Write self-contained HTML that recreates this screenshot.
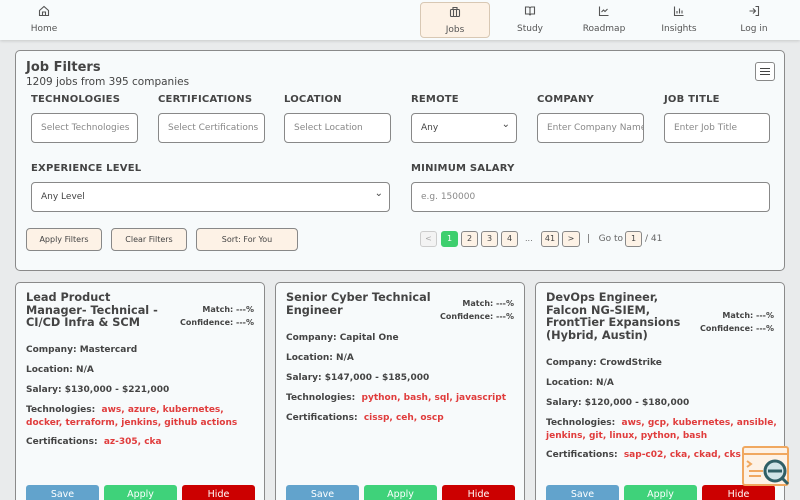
<!DOCTYPE html>
<html><head><meta charset="utf-8"><style>
*{box-sizing:border-box;margin:0;padding:0}
html{width:800px;height:500px;overflow:hidden}
body{width:800px;height:500px;overflow:hidden;background:#e9ebec;font-family:"DejaVu Sans","Liberation Sans",sans-serif;color:#444;position:relative}
.nav{position:absolute;left:0;top:0;width:800px;height:40px;background:#f8fbfc;box-shadow:0 1px 3px rgba(0,0,0,.15)}
.ni{position:absolute;top:0;height:40px;width:70px;text-align:center;font-size:9px;color:#555}
.ni svg{position:absolute;left:29px;top:5px}
.ni span{position:absolute;left:0;right:0;top:24px}
.ni.act{background:#fdf2e6;border:1px solid #d8c8b4;border-radius:4px;top:2px;height:36px}
.ni.act svg{top:3px;left:28px}.ni.act span{top:22px}
.panel{position:absolute;left:15px;top:50px;width:770px;height:221px;background:#f7fafb;border:1px solid #8a8a8a;border-radius:5px}
.abs{position:absolute}
.lbl{position:absolute;font-size:10px;font-weight:bold;color:#444;letter-spacing:.2px}
.inp{position:absolute;height:30px;border:1px solid #888;border-radius:4px;background:#fff;font-size:9px;color:#888;padding:0 9px;line-height:28px;white-space:nowrap;overflow:hidden}
.sel{color:#444}
.sel::after{content:"⌄";position:absolute;right:6px;top:-3px;font-size:10px;color:#444}
.btn{position:absolute;height:23px;border:1px solid #888;border-radius:4px;background:#fdf2e6;font-size:8px;color:#444;text-align:center;line-height:21px}
.pg{position:absolute;top:231px;height:16px;border:1px solid #888;border-radius:3px;background:#fdf2e6;font-size:8px;line-height:14px;text-align:center;color:#444}
.card{position:absolute;top:282px;width:250px;height:230px;background:#f7fafb;border:1px solid #8a8a8a;border-radius:5px}
.tt{position:absolute;left:10px;top:9px;font-size:11.3px;font-weight:bold;line-height:12.5px;color:#444}
.mt{position:absolute;right:10px;font-size:8px;font-weight:bold;text-align:right;line-height:12.5px}
.f{position:absolute;left:10px;font-size:9px;font-weight:bold;line-height:12.5px;width:238px}
.r{color:#e03c3c}
.b{position:absolute;top:202px;width:73px;height:18px;border-radius:3px;color:#fff;font-size:9.5px;text-align:center;line-height:20px}
</style></head><body>
<div class="nav">
 <div class="ni" style="left:9px"><svg width="12" height="12" viewBox="0 0 12 12" fill="none" stroke="#555" stroke-width="1.1"><path d="M1.5 5.5L6 1.5l4.5 4v5h-9z M4.5 10.5V7h3v3.5"/></svg><span>Home</span></div>
 <div class="ni act" style="left:420px"><svg width="12" height="12" viewBox="0 0 12 12" fill="none" stroke="#555" stroke-width="1.1"><rect x="1.5" y="3.5" width="9" height="7" rx="1"/><path d="M4 3.5V1.5h4v2M4.5 3.5v7M7.5 3.5v7"/></svg><span>Jobs</span></div>
 <div class="ni" style="left:495px"><svg width="12" height="12" viewBox="0 0 12 12" fill="none" stroke="#555" stroke-width="1.1"><path d="M1.5 2h3.5l1 1 1-1h3.5v7H7L6 10 5 9H1.5z M6 3v7"/></svg><span>Study</span></div>
 <div class="ni" style="left:569px"><svg width="12" height="12" viewBox="0 0 12 12" fill="none" stroke="#555" stroke-width="1.1"><path d="M1.5 1.5v9h9 M3.5 7l2-2 1.5 1.5 2.5-2.5"/></svg><span>Roadmap</span></div>
 <div class="ni" style="left:644px"><svg width="12" height="12" viewBox="0 0 12 12" fill="none" stroke="#555" stroke-width="1.1"><path d="M1.5 1.5v9h9 M4 8.5V6 M6.5 8.5V3.5 M9 8.5V5.5"/></svg><span>Insights</span></div>
 <div class="ni" style="left:719px"><svg width="12" height="12" viewBox="0 0 12 12" fill="none" stroke="#555" stroke-width="1.1"><path d="M7.5 1.5h3v9h-3 M1.5 6h6 M5 3.5L7.5 6 5 8.5"/></svg><span>Log in</span></div>
</div>

<div class="panel">
 <div class="abs" style="left:10px;top:9px;font-size:13px;font-weight:bold">Job Filters</div>
 <div class="abs" style="left:10px;top:25px;font-size:10.5px">1209 jobs from 395 companies</div>
 <div class="abs" style="left:739px;top:11px;width:20px;height:19px;border:1px solid #888;border-radius:3px;background:#fff"><div style="position:absolute;left:4px;top:5px;width:10px;height:7px;border-top:1.5px solid #444;border-bottom:1.5px solid #444"></div><div style="position:absolute;left:4px;top:8px;width:10px;border-top:1.5px solid #444"></div></div>
 <div class="lbl" style="left:15px;top:43px">TECHNOLOGIES</div>
 <div class="lbl" style="left:142px;top:43px">CERTIFICATIONS</div>
 <div class="lbl" style="left:268px;top:43px">LOCATION</div>
 <div class="lbl" style="left:395px;top:43px">REMOTE</div>
 <div class="lbl" style="left:521px;top:43px">COMPANY</div>
 <div class="lbl" style="left:648px;top:43px">JOB TITLE</div>
 <div class="inp" style="left:15px;top:62px;width:107px">Select Technologies</div>
 <div class="inp" style="left:142px;top:62px;width:107px">Select Certifications</div>
 <div class="inp" style="left:268px;top:62px;width:107px">Select Location</div>
 <div class="inp sel" style="left:395px;top:62px;width:106px">Any</div>
 <div class="inp" style="left:521px;top:62px;width:107px">Enter Company Name</div>
 <div class="inp" style="left:648px;top:62px;width:106px">Enter Job Title</div>
 <div class="lbl" style="left:15px;top:112px">EXPERIENCE LEVEL</div>
 <div class="lbl" style="left:395px;top:112px">MINIMUM SALARY</div>
 <div class="inp sel" style="left:15px;top:131px;width:359px">Any Level</div>
 <div class="inp" style="left:395px;top:131px;width:359px">e.g. 150000</div>
 <div class="btn" style="left:10px;top:177px;width:76px">Apply Filters</div>
 <div class="btn" style="left:95px;top:177px;width:76px">Clear Filters</div>
 <div class="btn" style="left:180px;top:177px;width:102px">Sort: For You</div>
</div>
<div class="pg" style="left:420px;width:17px;border-color:#ccc;color:#aaa;background:#f3f3f3">&lt;</div>
<div class="pg" style="left:441px;width:17px;background:#3ecf6e;border-color:#3ecf6e;color:#fff">1</div>
<div class="pg" style="left:461px;width:17px">2</div>
<div class="pg" style="left:481px;width:17px">3</div>
<div class="pg" style="left:501px;width:17px">4</div>
<div class="abs" style="left:525px;top:234px;font-size:8px;color:#666">...</div>
<div class="pg" style="left:541px;width:18px">41</div>
<div class="pg" style="left:562px;width:18px">&gt;</div>
<div class="abs" style="left:587px;top:234px;font-size:9px;color:#666">|&nbsp;&nbsp; Go to</div>
<div class="pg" style="left:625px;width:17px">1</div>
<div class="abs" style="left:645px;top:234px;font-size:9px;color:#666">/ 41</div>

<div class="card" style="left:15px">
 <div class="tt">Lead Product<br>Manager- Technical -<br>CI/CD Infra &amp; SCM</div>
 <div class="mt" style="top:21px">Match: ---%<br>Confidence: ---%</div>
 <div class="f" style="top:61px">Company: Mastercard</div>
 <div class="f" style="top:81px">Location: N/A</div>
 <div class="f" style="top:101px">Salary: $130,000 - $221,000</div>
 <div class="f" style="top:121px">Technologies: &nbsp;<span class="r">aws, azure, kubernetes,<br>docker, terraform, jenkins, github actions</span></div>
 <div class="f" style="top:153px">Certifications: &nbsp;<span class="r">az-305, cka</span></div>
 <div class="b" style="left:10px;background:#62a3cc">Save</div>
 <div class="b" style="left:88px;background:#3fd27a">Apply</div>
 <div class="b" style="left:166px;background:#cc0000">Hide</div>
</div>
<div class="card" style="left:275px">
 <div class="tt">Senior Cyber Technical<br>Engineer</div>
 <div class="mt" style="top:15px">Match: ---%<br>Confidence: ---%</div>
 <div class="f" style="top:49px">Company: Capital One</div>
 <div class="f" style="top:69px">Location: N/A</div>
 <div class="f" style="top:89px">Salary: $147,000 - $185,000</div>
 <div class="f" style="top:109px">Technologies: &nbsp;<span class="r">python, bash, sql, javascript</span></div>
 <div class="f" style="top:129px">Certifications: &nbsp;<span class="r">cissp, ceh, oscp</span></div>
 <div class="b" style="left:10px;background:#62a3cc">Save</div>
 <div class="b" style="left:88px;background:#3fd27a">Apply</div>
 <div class="b" style="left:166px;background:#cc0000">Hide</div>
</div>
<div class="card" style="left:535px">
 <div class="tt">DevOps Engineer,<br>Falcon NG-SIEM,<br>FrontTier Expansions<br>(Hybrid, Austin)</div>
 <div class="mt" style="top:27px">Match: ---%<br>Confidence: ---%</div>
 <div class="f" style="top:74px">Company: CrowdStrike</div>
 <div class="f" style="top:94px">Location: N/A</div>
 <div class="f" style="top:114px">Salary: $120,000 - $180,000</div>
 <div class="f" style="top:134px">Technologies: &nbsp;<span class="r">aws, gcp, kubernetes, ansible, jenkins, git, linux, python, bash</span></div>
 <div class="f" style="top:166px">Certifications: &nbsp;<span class="r">sap-c02, cka, ckad, cks</span></div>
 <div class="b" style="left:10px;background:#62a3cc">Save</div>
 <div class="b" style="left:88px;background:#3fd27a">Apply</div>
 <div class="b" style="left:166px;background:#cc0000">Hide</div>
</div>
<svg class="abs" style="left:741px;top:445px" width="52" height="50" viewBox="0 0 52 50">
 <rect x="2" y="2" width="45" height="38" rx="2" fill="#fdf2e6" stroke="#f0a860" stroke-width="2"/>
 <line x1="2" y1="9" x2="47" y2="9" stroke="#f0a860" stroke-width="2"/>
 <path d="M6 16l4 3-4 3 M8 26h14 M8 31h12" stroke="#f0a860" stroke-width="2" fill="none"/>
 <circle cx="34" cy="26" r="10" fill="#d0e4e8" stroke="#2f5f66" stroke-width="3"/>
 <path d="M27 26h14 M41 33l6 6" stroke="#2f5f66" stroke-width="3"/>
</svg>
</body></html>
